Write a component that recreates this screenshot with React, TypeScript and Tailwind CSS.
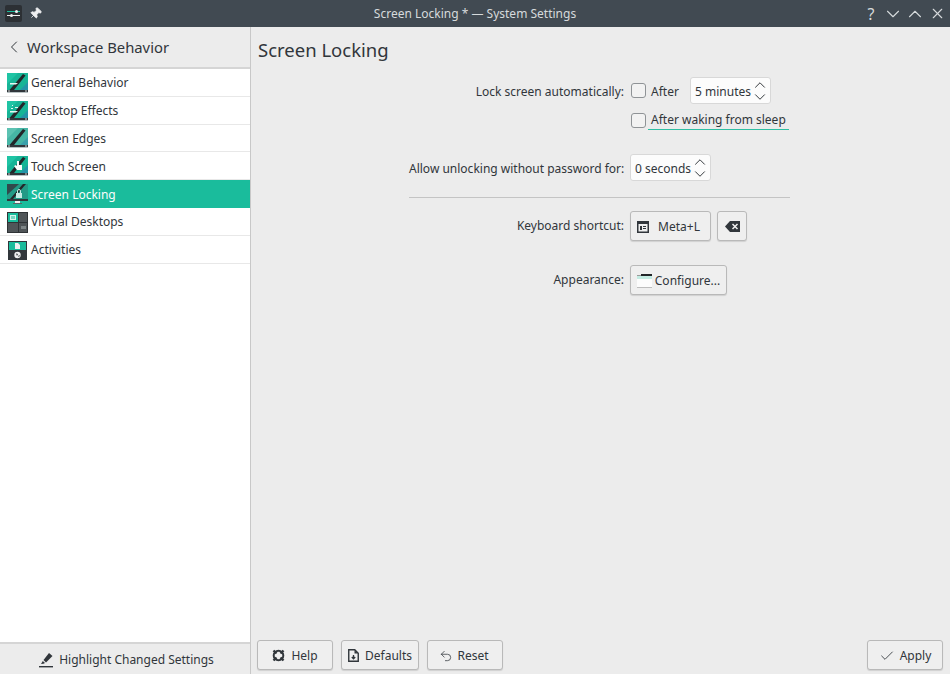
import { Check, ChevronDown, ChevronLeft, ChevronUp, Pin, Undo2, X } from "lucide-react";
import type { ReactNode } from "react";

function SlashIcon({ touch, light, spark }: { touch?: boolean; light?: boolean; spark?: boolean }) {
    return (
        <svg width="21" height="21" viewBox="0 0 21 21" className="shrink-0">
            <rect x="0" y="0" width="21" height="18" fill={light ? "#46b5a5" : "#17b496"} />
            <path d="M0 0h11L0 11z" fill={light ? "#5cc2b2" : "#1fc4a4"} />
            <path d="M21 18V9l-9 9z" fill={light ? "#3aa0ab" : "#2494a8"} />
            <path d="M16 1l2.5 1.5L7 17H2.5z" fill="#232629" />
            {touch && <path d="M10 5h2v4h3v5h-5l-3-4 2-1 1 1z" fill="#fcfcfc" />}
            {!touch && !light && <path d="M3 10h8l-2 1.5H3z" fill="#e6f7f3" />}
            {spark && <path d="M5 4h1v1H5zM8 6h3v1H8zM4 7h2v1H4z" fill="#e6f7f3" />}
            <rect x="0" y="17" width="21" height="2" fill="#31363b" />
            <rect x="1" y="17.5" width="2" height="1" fill="#cfd3d4" />
            <rect x="18" y="17.5" width="2" height="1" fill="#cfd3d4" />
            <rect x="0" y="19" width="21" height="1" fill="#b9c2c4" />
        </svg>
    );
}

function LockIcon() {
    return (
        <svg width="21" height="21" viewBox="0 0 21 21" className="shrink-0">
            <rect x="0" y="0" width="21" height="16" fill="#31494c" />
            <path d="M0 16v-5L12 0h9v16z" fill="#239a86" />
            <path d="M16 0L3 15h3L19 0z" fill="#232629" />
            <path d="M9 9h6v5H9z" fill="#c5ebe4" />
            <path d="M10.5 9V7a1.5 1.5 0 0 1 3 0v2" fill="none" stroke="#c5ebe4" />
            <rect x="0" y="15" width="21" height="2" fill="#31363b" />
            <rect x="8" y="17" width="5" height="2" fill="#eff0f1" />
            <rect x="6" y="19" width="9" height="1" fill="#5b6367" />
        </svg>
    );
}

function DesktopsIcon() {
    return (
        <svg width="21" height="21" viewBox="0 0 21 21" className="shrink-0">
            <rect width="21" height="21" fill="#2f3336" />
            <rect x="1" y="1" width="10" height="9" fill="#1abc9c" />
            <rect x="12" y="1" width="8" height="9" fill="#505558" />
            <rect x="1" y="11" width="10" height="9" fill="#505558" />
            <rect x="12" y="11" width="8" height="9" fill="#505558" />
            <rect x="3.5" y="3.5" width="5" height="4" fill="#78d6c3" stroke="#d6f3ec" />
            <rect x="14" y="14" width="5" height="3" fill="#7f8688" />
        </svg>
    );
}

function ActivitiesIcon() {
    return (
        <svg width="19" height="19" viewBox="0 0 19 19" className="ml-[1px] shrink-0">
            <rect width="19" height="19" fill="#31363b" />
            <rect x="1" y="1" width="17" height="8" fill="#1abc9c" />
            <path d="M7 2h3l2 2v4H7z" fill="#eff0f1" />
            <circle cx="9.5" cy="14" r="3.2" fill="#eff0f1" />
            <path d="M8 12.5l2 .5-1 2zM11 14l1 1-2 1z" fill="#31363b" />
        </svg>
    );
}

const sidebarItems: { label: string; icon: ReactNode; active?: boolean }[] = [
    { label: "General Behavior", icon: <SlashIcon /> },
    { label: "Desktop Effects", icon: <SlashIcon spark /> },
    { label: "Screen Edges", icon: <SlashIcon light /> },
    { label: "Touch Screen", icon: <SlashIcon touch /> },
    { label: "Screen Locking", icon: <LockIcon />, active: true },
    { label: "Virtual Desktops", icon: <DesktopsIcon /> },
    { label: "Activities", icon: <ActivitiesIcon /> },
];

function KdeButton({ children, className }: { children: ReactNode; className: string }) {
    return (
        <button
            type="button"
            className={`flex items-center justify-center rounded-[3px] border border-[#b9b9b9] bg-[#efefef] pt-[1px] text-[#31363b] shadow-[0_1px_1px_rgba(0,0,0,0.12)] ${className}`}
        >
            {children}
        </button>
    );
}

function Spin({ value, className }: { value: string; className: string }) {
    return (
        <div className={`flex h-[27px] items-center justify-between whitespace-nowrap rounded-[3px] border border-[#d8d8d8] bg-[#fcfcfc] pl-[4px] pr-[1px] ${className}`}>
            <span className="pt-[2px]">{value}</span>
            <span className="flex flex-col text-[#31363b]">
                <ChevronUp size={18} strokeWidth={1.3} className="-my-[3px]" />
                <ChevronDown size={18} strokeWidth={1.3} className="-my-[3px]" />
            </span>
        </div>
    );
}

function CheckBox() {
    return <span className="ml-[1px] block h-[15px] w-[15px] shrink-0 rounded-[3px] border border-[#8f9396] bg-[#f2f2f2]" />;
}

function Label({ children, drop }: { children: ReactNode; drop?: boolean }) {
    return <div className={`whitespace-nowrap text-right ${drop ? "pt-[2px]" : ""}`}>{children}</div>;
}

export default function App() {
    return (
        <div className="flex h-[674px] w-[950px] flex-col overflow-hidden bg-[#ececec] font-['Noto_Sans',sans-serif] text-[12px] text-[#31363b]">
            <header className="flex h-[27px] shrink-0 items-center bg-[#414a52] text-[#d6dadc]">
                <div className="ml-[5px] flex h-[17px] w-[17px] flex-col justify-center gap-[3px] rounded-[2px] bg-[#2c3034] px-[2px]">
                    <div className="relative h-px bg-[#1abc9c]">
                        <span className="absolute right-[2px] -top-[1px] h-[3px] w-[3px] rounded-full bg-[#eff0f1]" />
                    </div>
                    <div className="relative h-px bg-[#eff0f1]">
                        <span className="absolute left-[3px] -top-[1px] h-[3px] w-[3px] rounded-full bg-[#eff0f1]" />
                    </div>
                </div>
                <Pin size={13} fill="#eff0f1" strokeWidth={1.5} className="ml-[7px] rotate-45 text-[#eff0f1]" />
                <div className="flex-1 text-center [text-indent:48px]">Screen Locking * — System Settings</div>
                <div className="mr-[2px] flex items-center">
                    <span className="w-[22px] text-center text-[16px] leading-none">?</span>
                    <span className="flex w-[22px] justify-center"><ChevronDown size={22} strokeWidth={1.2} /></span>
                    <span className="flex w-[22px] justify-center"><ChevronUp size={22} strokeWidth={1.2} /></span>
                    <span className="flex w-[22px] justify-center"><X size={17} strokeWidth={1.6} /></span>
                </div>
            </header>

            <div className="flex min-h-0 flex-1">
                <aside className="flex w-[251px] shrink-0 flex-col border-r border-[#c8c8c8]">
                    <div className="flex h-[42px] shrink-0 items-center border-b-2 border-[#d5d5d5] pl-[4px] text-[14.8px]">
                        <ChevronLeft size={20} strokeWidth={1.2} />
                        <span className="ml-[3px]">Workspace Behavior</span>
                    </div>
                    <nav className="flex-1 bg-white">
                        {sidebarItems.map((item) => (
                            <div
                                key={item.label}
                                className={`flex h-[27.8px] items-center border-b pl-[7px] pt-[2px] ${
                                    item.active ? "border-[#1abc9c] bg-[#1abc9c] text-[#fcfcfc]" : "border-[#e8e8e8]"
                                }`}
                            >
                                <span className="flex w-[24px] items-center">{item.icon}</span>
                                <span>{item.label}</span>
                            </div>
                        ))}
                    </nav>
                    <div className="flex h-[32px] shrink-0 items-center justify-center gap-[5px] border-t-2 border-[#d5d5d5] pl-[2px] pt-[2px]">
                        <svg width="16" height="16" viewBox="0 0 16 16">
                            <path d="M11 1l3.5 3L8 10.5 5.5 8z" fill="#31363b" />
                            <path d="M4.8 9L7 11l-1.5.8-2.5.3z" fill="#31363b" />
                            <rect x="1" y="14" width="14" height="1.4" fill="#31363b" />
                        </svg>
                        <span>Highlight Changed Settings</span>
                    </div>
                </aside>

                <main className="flex min-w-0 flex-1 flex-col">
                    <h1 className="ml-[7px] mt-[9px] text-[18.5px] leading-[28px]">Screen Locking</h1>

                    <div className="ml-[158px] mt-[13px] flex w-[381px] flex-1 flex-col">
                        <div className="grid grid-cols-[215px_1fr] items-center gap-x-[6px]">
                            <Label drop>Lock screen automatically:</Label>
                            <div className="flex items-center">
                                <CheckBox />
                                <span className="ml-[5px] w-[39px] pt-[2px]">After</span>
                                <Spin value="5 minutes" className="w-[81px]" />
                            </div>
                        </div>
                        <div className="ml-[221px] mt-[7px] flex h-[19px] items-center">
                            <CheckBox />
                            <span className="ml-[2px] w-[141px] whitespace-nowrap border-b border-[#2fbfa3] pl-[3px] leading-[18px]">After waking from sleep</span>
                        </div>
                        <div className="mt-[24px] grid grid-cols-[215px_1fr] items-center gap-x-[6px]">
                            <Label drop>Allow unlocking without password for:</Label>
                            <Spin value="0 seconds" className="w-[81px]" />
                        </div>
                        <div className="mt-[16px] h-px bg-[#c4c4c4]" />
                        <div className="mt-[13px] grid grid-cols-[215px_1fr] items-center gap-x-[6px]">
                            <Label>Keyboard shortcut:</Label>
                            <div className="flex items-center gap-[6px]">
                                <KdeButton className="h-[30px] w-[81px] gap-[9px] pr-[4px]">
                                    <svg width="12" height="12" viewBox="0 0 12 12">
                                        <path d="M.75.75h10.5v10.5H.75z" fill="none" stroke="#31363b" strokeWidth="1.5" />
                                        <path d="M1 1h10v2H1zM3 5h2v4H3zM6 5h3v1H6zM6 7h3v1H6z" fill="#31363b" />
                                    </svg>
                                    <span>Meta+L</span>
                                </KdeButton>
                                <KdeButton className="h-[30px] w-[30px]">
                                    <svg width="15" height="11" viewBox="0 0 15 11">
                                        <path d="M5 0h10v11H5L0 5.5z" fill="#31363b" />
                                        <path d="M7.5 3l5 5M12.5 3l-5 5" stroke="#efefef" strokeWidth="1.5" />
                                    </svg>
                                </KdeButton>
                            </div>
                        </div>
                        <div className="mt-[24px] grid grid-cols-[215px_1fr] items-center gap-x-[6px]">
                            <Label>Appearance:</Label>
                            <KdeButton className="h-[30px] w-[97px] gap-[3px]">
                                <svg width="15" height="14" viewBox="0 0 15 14">
                                    <rect y="1" width="15" height="13" fill="#fcfcfc" />
                                    <rect y="1" width="4" height="1" fill="#9a9a9a" />
                                    <rect y="2" width="15" height="3" fill="#c4ece3" />
                                    <rect x="4" y="0" width="11" height="2" fill="#232629" />
                                    <rect y="13" width="15" height="1" fill="#bdbdbd" />
                                </svg>
                                <span>Configure...</span>
                            </KdeButton>
                        </div>
                    </div>

                    <footer className="flex h-[34px] shrink-0 items-start justify-between pl-[6px] pr-[7px]">
                        <div className="flex gap-[8px]">
                            <KdeButton className="h-[30px] w-[76px] gap-[6px]">
                                <svg width="13" height="13" viewBox="0 0 13 13">
                                    <circle cx="6.5" cy="6.5" r="4.8" fill="none" stroke="#31363b" strokeWidth="2" />
                                    <path d="M1.5 1.5l3 3M11.5 1.5l-3 3M1.5 11.5l3-3M11.5 11.5l-3-3" stroke="#31363b" strokeWidth="2.4" />
                                </svg>
                                <span>Help</span>
                            </KdeButton>
                            <KdeButton className="h-[30px] w-[78px] gap-[6px]">
                                <svg width="11" height="13" viewBox="0 0 11 13">
                                    <path d="M.75.75h6l3.5 3.5v8h-9.5z" fill="none" stroke="#31363b" strokeWidth="1.4" />
                                    <path d="M6.5 1v3.5H10z" fill="#31363b" />
                                    <path d="M5.5 6v3.5M3.8 8l1.7 1.8L7.2 8" fill="none" stroke="#31363b" strokeWidth="1.3" />
                                </svg>
                                <span>Defaults</span>
                            </KdeButton>
                            <KdeButton className="h-[30px] w-[76px] gap-[4px] pr-[2px]">
                                <Undo2 size={14} strokeWidth={1.3} />
                                <span>Reset</span>
                            </KdeButton>
                        </div>
                        <KdeButton className="h-[30px] w-[76px] gap-[5px]">
                            <Check size={16} strokeWidth={1.3} />
                            <span>Apply</span>
                        </KdeButton>
                    </footer>
                </main>
            </div>
        </div>
    );
}
